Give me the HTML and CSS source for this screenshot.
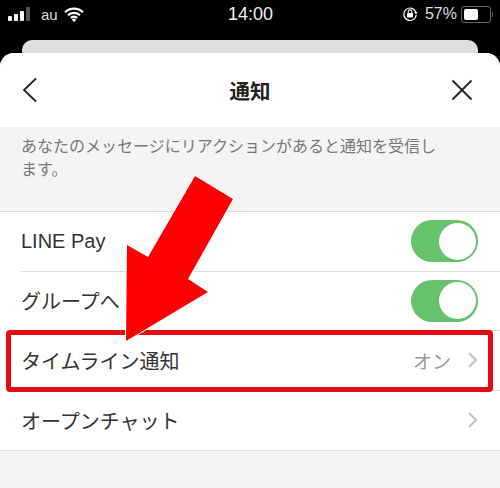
FILE: index.html
```html
<!DOCTYPE html>
<html lang="ja">

<head>
    <meta charset="UTF-8">
    <title>通知</title>
    <link rel="stylesheet" href="styles.css">
</head>

<body>
    <!-- Status bar -->
    <div class="status">
        <div class="status-left">
            <div class="signal"><i></i><i></i><i></i><i></i></div>
            <span class="carrier">au</span>
            <svg class="wifi" width="20" height="15" viewBox="0 0 20 15">
                <path d="M1 5.2a13 13 0 0 1 18 0M4 8.3a8.6 8.6 0 0 1 12 0M6.9 11a4.4 4.4 0 0 1 6.2 0" fill="none" stroke="#fff" stroke-width="2.2"/>
                <path d="M10 15l-2.2-2.3a3 3 0 0 1 4.4 0z" fill="#fff"/>
            </svg>
        </div>
        <div class="clock">14:00</div>
        <div class="status-right">
            <svg class="lock" width="16" height="16" viewBox="0 0 16 16">
                <path d="M14 6.5A6.2 6.2 0 1 0 14.2 9" fill="none" stroke="#fff" stroke-width="1.2"/>
                <path d="M12.2 6.2h3.4L14 8.4z" fill="#fff"/>
                <rect x="5" y="7" width="6" height="4.6" rx=".6" fill="#fff"/>
                <path d="M6.3 7V5.6a1.7 1.7 0 0 1 3.4 0V7" fill="none" stroke="#fff" stroke-width="1.1"/>
            </svg>
            <span class="percent">57%</span>
            <div class="battery"><div class="battery-level"></div></div>
            <div class="battery-cap"></div>
        </div>
    </div>

    <div class="backsheet"></div>

    <div class="sheet">
        <div class="nav">
            <svg class="back" width="18" height="26" viewBox="0 0 18 26">
                <path d="M15 1.5L3 13l12 11.5" fill="none" stroke="#222" stroke-width="1.8"/>
            </svg>
            <h1>通知</h1>
            <svg class="close" width="22" height="22" viewBox="0 0 22 22">
                <path d="M1.5 1.5l19 19M20.500 1.500l-19 19" fill="none" stroke="#222" stroke-width="1.8"/>
            </svg>
        </div>

        <p class="desc">あなたのメッセージにリアクションがあると通知を受信します。</p>

        <div class="list">
            <div class="row">
                <span>LINE Pay</span>
                <div class="toggle"><div class="knob"></div></div>
            </div>
            <div class="row">
                <span>グループへ</span>
                <div class="toggle"><div class="knob"></div></div>
            </div>
            <div class="row">
                <span>タイムライン通知</span>
                <div class="row-value">
                    <span class="value">オン</span>
                    <svg class="chev" width="11" height="18" viewBox="0 0 11 18">
                        <path d="M2 2l7 7-7 7" fill="none" stroke="#c4c4c8" stroke-width="2.2"/>
                    </svg>
                </div>
            </div>
            <div class="row">
                <span>オープンチャット</span>
                <div class="row-value">
                    <svg class="chev" width="11" height="18" viewBox="0 0 11 18">
                        <path d="M2 2l7 7-7 7" fill="none" stroke="#c4c4c8" stroke-width="2.2"/>
                    </svg>
                </div>
            </div>
        </div>
    </div>

    <!-- Annotation laid over the screenshot -->
    <div class="highlight"></div>
    <svg class="arrow" width="500" height="488" viewBox="0 0 500 488">
        <path class="arrow-shape" d="M195 176L233 199L188 279L208 292L126 341L127 245L148 257z"/>
    </svg>
</body>

</html>
```

FILE: styles.css
```css
html, body {
    height: 100%;
    margin: 0;
}

body {
    position: relative;
    overflow: hidden;
    width: 500px;
    height: 488px;
    background-color: #000;
    font-family: "Liberation Sans", "Noto Sans CJK JP", sans-serif;
    color: #333;
}

/* Status bar */
.status {
    height: 28px;
    display: flex;
    align-items: center;
    justify-content: space-between;
    padding: 0 7px 0 8px;
    color: #fff;
}

.status-left {
    display: flex;
    align-items: center;
    width: 150px;
}

.signal {
    display: flex;
    align-items: flex-end;
    gap: 2px;
    height: 14px;
}

.signal i {
    width: 4px;
    background-color: #fff;
    border-radius: 1px;
}

.signal i:nth-child(1) { height: 5px; }
.signal i:nth-child(2) { height: 7px; }
.signal i:nth-child(3) { height: 10px; }
.signal i:nth-child(4) { height: 14px; background-color: #555; }

.carrier {
    font-size: 15px;
    margin-left: 11px;
    color: #ddd;
}

.wifi {
    margin-left: 6px;
}

.clock {
    font-size: 18px;
    color: #f2f2f2;
}

.status-right {
    display: flex;
    align-items: center;
    justify-content: flex-end;
    width: 150px;
}

.percent {
    font-size: 16px;
    margin: 0 4px 0 7px;
    color: #ddd;
}

.battery {
    width: 24px;
    height: 11px;
    padding: 2px;
    border: 1px solid #666;
    border-radius: 3px;
}

.battery-level {
    width: 60%;
    height: 100%;
    background-color: #fff;
    border-radius: 2px;
}

.battery-cap {
    width: 1px;
    height: 5px;
    margin-left: 1px;
    background-color: #555;
}

/* Card peeking out behind the sheet */
.backsheet {
    height: 13px;
    margin: 12px 22px 0 22px;
    background-color: #dedede;
    border-radius: 10px 10px 0 0;
}

.sheet {
    height: 435px;
    background-color: #f4f4f6;
    border-radius: 14px 14px 0 0;
    overflow: hidden;
}

.nav {
    height: 74px;
    display: grid;
    grid-template-columns: 1fr auto 1fr;
    align-items: center;
    padding: 0 27px;
    background-color: #fff;
    box-sizing: border-box;
}

.back {
    margin-left: -6px;
}

.close {
    justify-self: end;
}

.nav h1 {
    margin: 0;
    font-size: 20.5px;
    font-weight: bold;
    color: #222;
}

.desc {
    height: 84px;
    margin: 0;
    padding: 8px 50px 0 21px;
    box-sizing: border-box;
    font-size: 16px;
    line-height: 23px;
    color: #777;
    background-color: #f4f4f4;
}

.list {
    background-color: #fff;
    border-top: 1px solid #d8d8d8;
    border-bottom: 1px solid #e2e2e2;
}

.row {
    height: 59.5px;
    box-sizing: border-box;
    display: flex;
    align-items: center;
    justify-content: space-between;
    margin-left: 21px;
    padding-right: 22px;
    border-bottom: 1px solid #ddd;
    font-size: 20px;
    color: #333;
}

.row:last-child {
    border-bottom: none;
}

.row-value {
    display: flex;
    align-items: center;
}

.value {
    font-size: 19px;
    color: #999;
    margin-right: 16px;
}

.toggle {
    width: 67px;
    height: 42px;
    background-color: #66c26b;
    border-radius: 21px;
    display: flex;
    justify-content: flex-end;
    align-items: center;
    padding-right: 2px;
    box-sizing: border-box;
}

.knob {
    width: 37px;
    height: 37px;
    background-color: #fff;
    border-radius: 50%;
}

/* Red annotation */
.highlight {
    position: absolute;
    left: 6px;
    top: 330px;
    width: 477px;
    height: 52px;
    border: 5px solid #e60a12;
    border-radius: 4px;
}

.arrow {
    position: absolute;
    left: 0;
    top: 0;
}

.arrow-shape {
    fill: #fe0000;
    stroke: #fff;
    stroke-width: 2px;
    paint-order: stroke;
}
```
